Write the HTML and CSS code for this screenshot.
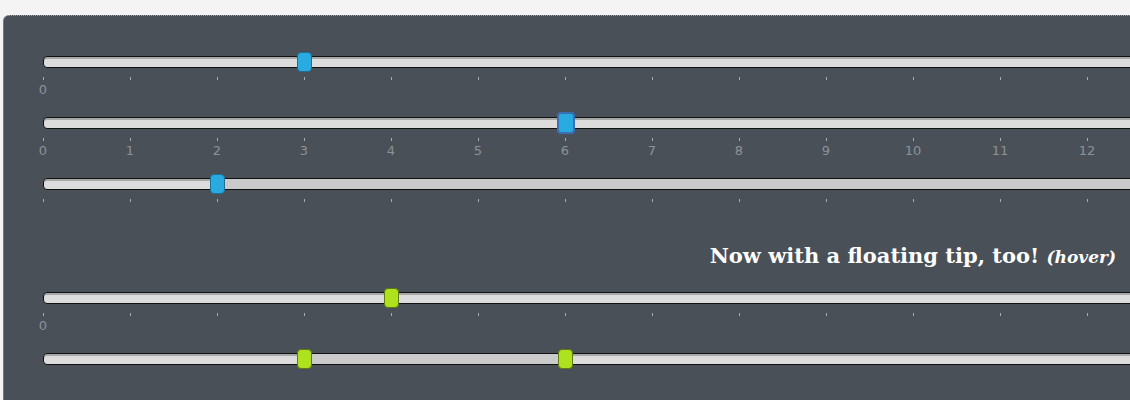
FILE: index.html
```html
<!DOCTYPE html>
<html lang="en">
<head>
<meta charset="UTF-8" />
<title>Slider pips</title>
<link rel="stylesheet" href="styles.css">
</head>
<body>
<div class="panel">

  <!-- basic, only first label -->
  <div class="slider-block">
    <div class="track">
      <span class="handle blue" style="left:261px"></span>
    </div>
    <div class="pips first-only">
      <span class="pip"><i></i>0</span><span class="pip"><i></i>1</span><span class="pip"><i></i>2</span><span class="pip"><i></i>3</span><span class="pip"><i></i>4</span><span class="pip"><i></i>5</span><span class="pip"><i></i>6</span><span class="pip"><i></i>7</span><span class="pip"><i></i>8</span><span class="pip"><i></i>9</span><span class="pip"><i></i>10</span><span class="pip"><i></i>11</span><span class="pip"><i></i>12</span>
    </div>
  </div>

  <!-- all labels -->
  <div class="slider-block">
    <div class="track">
      <span class="handle blue hover" style="left:522px"></span>
    </div>
    <div class="pips">
      <span class="pip"><i></i>0</span><span class="pip"><i></i>1</span><span class="pip"><i></i>2</span><span class="pip"><i></i>3</span><span class="pip"><i></i>4</span><span class="pip"><i></i>5</span><span class="pip"><i></i>6</span><span class="pip"><i></i>7</span><span class="pip"><i></i>8</span><span class="pip"><i></i>9</span><span class="pip"><i></i>10</span><span class="pip"><i></i>11</span><span class="pip"><i></i>12</span>
    </div>
  </div>

  <!-- range max, no labels -->
  <div class="slider-block">
    <div class="track">
      <span class="range" style="left:174px; right:0"></span>
      <span class="handle blue" style="left:174px"></span>
    </div>
    <div class="pips no-labels">
      <span class="pip"><i></i>0</span><span class="pip"><i></i>1</span><span class="pip"><i></i>2</span><span class="pip"><i></i>3</span><span class="pip"><i></i>4</span><span class="pip"><i></i>5</span><span class="pip"><i></i>6</span><span class="pip"><i></i>7</span><span class="pip"><i></i>8</span><span class="pip"><i></i>9</span><span class="pip"><i></i>10</span><span class="pip"><i></i>11</span><span class="pip"><i></i>12</span>
    </div>
  </div>

  <h2 class="tip-title">Now with a floating tip, too! <em>(hover)</em></h2>

  <div class="slider-block">
    <div class="track">
      <span class="handle green" style="left:348px"></span>
    </div>
    <div class="pips first-only">
      <span class="pip"><i></i>0</span><span class="pip"><i></i>1</span><span class="pip"><i></i>2</span><span class="pip"><i></i>3</span><span class="pip"><i></i>4</span><span class="pip"><i></i>5</span><span class="pip"><i></i>6</span><span class="pip"><i></i>7</span><span class="pip"><i></i>8</span><span class="pip"><i></i>9</span><span class="pip"><i></i>10</span><span class="pip"><i></i>11</span><span class="pip"><i></i>12</span>
    </div>
  </div>

  <!-- range between two handles -->
  <div class="slider-block">
    <div class="track">
      <span class="range" style="left:261px; width:261px"></span>
      <span class="handle green" style="left:261px"></span>
      <span class="handle green" style="left:522px"></span>
    </div>
  </div>

</div>
</body>
</html>
```

FILE: styles.css
```css
body {
  margin: 0; padding: 0; background: #f4f4f4;
  font-family: 'DejaVu Sans', Verdana, sans-serif;
  overflow: hidden;
}

.panel {
  margin: 15px 0 0 3px; width: 1300px; height: 400px;
  box-sizing: border-box;
  padding: 40px 0 0 39px;
  background: #4a5058;
  border: 1px dotted #9aa0a8;
  border-radius: 6px;
}

.slider-block {
  width: 1200px;
  margin-bottom: 23px;
}

/* track: light body, darker line under top border */
.track {
  position: relative;
  height: 10px;
  border: 1px solid #111;
  border-radius: 4px;
  background: #dcdcdc;
  box-shadow: inset 0 2px 0 #a8a8a8;
}
.track .range {
  position: absolute; top: 0; bottom: 0;
  background: #cacaca;
}

.handle {
  position: absolute; top: -5px;
  width: 13px; height: 18px; margin-left: -8px;
  border: 1px solid; border-radius: 4px;
}
.handle.blue { background: #29abe2; border-color: #1d6f93; }
.handle.blue.hover {
  top: -6px; width: 14px; height: 18px; margin-left: -9px;
  border: 2px solid #3a6fb5;
}
.handle.green { background: #aee21f; border-color: #5e7a10; }

/* scale under the track */
.pips {
  display: flex;
  margin: 9px 0 0 -43.5px;
  height: 17px;
}
.pip {
  flex: 0 0 87px;
  text-align: center;
  font-size: 13px; line-height: 19px;
  color: #8d9298;
}
.pip i {
  display: block; width: 1px; height: 3px;
  margin: 0 auto;
  background: #a9adb2;
}
.pips.first-only .pip,
.pips.no-labels .pip { color: transparent; }
.pips.first-only .pip:first-child { color: #8d9298; }

.tip-title {
  width: 1073px;
  margin: 0 0 18px;
  text-align: right;
  font-family: 'DejaVu Serif', serif;
  font-size: 21px; line-height: 34px;
  color: #fff;
}
.tip-title em {
  font-size: 17px;
}
```
